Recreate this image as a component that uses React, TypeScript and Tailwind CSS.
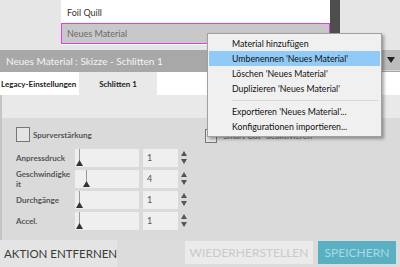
import React from "react";

const F = { fontFamily: 'Lato, "Noto Sans", sans-serif' };

function Tri() {
  return (
    <svg width="7" height="6" viewBox="0 0 7 6" className="block">
      <path d="M0 6 L3.5 0 L7 6 Z" fill="#333" />
    </svg>
  );
}

function Slider({ pos }: { pos: number }) {
  return (
    <div className="relative w-[64px] h-[18px] bg-[#efefef]">
      <div className="absolute top-0 w-px h-[12px] bg-[#9a9a9a]" style={{ left: pos + 3 }} />
      <div className="absolute top-[11px]" style={{ left: pos }}>
        <Tri />
      </div>
    </div>
  );
}

function Spinner() {
  return (
    <div className="flex flex-col items-center justify-center gap-[3px] w-[8px] h-[18px]">
      <svg width="6" height="5" viewBox="0 0 6 5"><path d="M0 5 L3 0 L6 5Z" fill="#555" /></svg>
      <svg width="6" height="5" viewBox="0 0 6 5"><path d="M0 0 L3 5 L6 0Z" fill="#555" /></svg>
    </div>
  );
}

function Row({ label, value, pos }: { label: React.ReactNode; value: string; pos: number }) {
  return (
    <div className="flex items-center h-[21px] pl-[14px]">
      <div className="w-[59px] text-[8px] leading-[10px] text-[#555] font-bold">{label}</div>
      <Slider pos={pos} />
      <div className="ml-[4px] w-[35px] h-[18px] bg-[#efefef] text-[9px] text-[#555] pl-[4px] leading-[18px]">{value}</div>
      <div className="ml-[2px]"><Spinner /></div>
    </div>
  );
}

export default function App() {
  const items = [
    "Material hinzufügen",
    "Umbenennen 'Neues Material'",
    "Löschen 'Neues Material'",
    "Duplizieren 'Neues Material'",
  ];
  return (
    <div className="relative w-[400px] h-[267px] overflow-hidden bg-[#dadada]" style={F}>
      {/* top list */}
      <div className="flex h-[50px] bg-[#e6e6e6]">
        <div className="w-[61px]" />
        <div className="w-[269px] h-[45px] bg-white pt-[3px]">
          <div className="h-[20px] pl-[6px] text-[9px] leading-[20px] text-[#333]">Foil Quill</div>
          <div className="h-[21px] border border-[#e040e0] bg-[#c8c8c8] pl-[5px] text-[9px] leading-[19px] text-[#6a6a6a]">Neues Material</div>
        </div>
        <div className="w-[10px] h-[45px] bg-[#4e4e4e]" />
      </div>
      {/* header */}
      <div className="flex h-[22px] bg-[#a8a8a8]">
        <div className="flex-1 pl-[6px] text-[10px] leading-[22px] text-[#f4f4f4]">Neues Material : Skizze - Schlitten 1</div>
        <div className="w-[19px] h-[21px] border-l border-b border-[#d6d6d6] bg-[#bcbcbc] flex items-center justify-center">
          <svg width="8" height="6" viewBox="0 0 8 6"><path d="M0 0 L8 0 L4 6Z" fill="#222" /></svg>
        </div>
      </div>
      {/* tabs */}
      <div className="flex h-[23px] bg-white">
        <div className="w-[79px] text-[8px] font-bold text-[#222] leading-[25px] pl-px whitespace-nowrap">Legacy-Einstellungen</div>
        <div className="w-[78px] bg-[#e9e9e9] text-[8px] font-bold text-[#222] leading-[25px] text-center">Schlitten 1</div>
      </div>
      {/* content */}
      <div className="h-[23px] bg-[#e9e9e9] border-l-2 border-[#c4c4c4]" />
      <div className="h-[122px] bg-[#dadada] border-l-2 border-[#c4c4c4] pt-[9px]">
        <div className="flex items-center h-[15px] pl-[14px]">
          <div className="flex items-center w-[189px]">
            <div className="w-[14px] h-[15px] border border-[#777] bg-[#e4e4e4]" />
            <div className="ml-[3px] text-[8px] text-[#555] font-bold">Spurverstärkung</div>
          </div>
          <div className="w-[12px] h-[14px] mt-[2px] border border-[#777] bg-[#e4e4e4]" />
          <div className="ml-[3px] mt-[3px] text-[8.5px] text-[#666]">"Smart Cut" deaktivieren</div>
        </div>
        <div className="mt-[5px]">
          <Row label="Anpressdruck" value="1" pos={1} />
          <Row label={<>Geschwindigke<br />it</>} value="4" pos={8} />
          <Row label="Durchgänge" value="1" pos={1} />
          <Row label="Accel." value="1" pos={1} />
        </div>
      </div>
      {/* bottom */}
      <div className="flex h-[27px] bg-[#dcdcdc]">
        <div className="w-[117px] bg-[#e4e4e4] text-[11.5px] text-[#3a3a3a] leading-[27px] pl-[4px] whitespace-nowrap">AKTION ENTFERNEN</div>
        <div className="ml-[68px] mt-[1px] w-[128px] h-[23px] bg-[#ebebeb] text-[12px] text-[#cacaca] leading-[23px] text-center">WIEDERHERSTELLEN</div>
        <div className="ml-[5px] mt-[1px] w-[78px] h-[23px] bg-[#5aafc2] text-[12px] text-[#a6dbe5] leading-[23px] text-center">SPEICHERN</div>
      </div>
      {/* context menu */}
      <div className="absolute left-[207px] top-[33px] w-[175px] bg-[#f0f0f0] border border-[#a0a0a0] py-[2px] shadow-[2px_2px_3px_rgba(0,0,0,0.35)]">
        {items.map((t, i) => (
          <div key={t} className={"mx-px h-[15px] pl-[23px] text-[8.75px] leading-[15px] text-[#111] whitespace-nowrap " + (i === 1 ? "bg-[#91c9f7]" : "")}>{t}</div>
        ))}
        <div className="h-[8px] flex items-center pl-[24px] pr-[3px]"><div className="h-px w-full bg-[#d7d7d7]" /></div>
        <div className="mx-px h-[15px] pl-[23px] text-[8.75px] leading-[15px] text-[#111] whitespace-nowrap">Exportieren 'Neues Material'...</div>
        <div className="mx-px h-[15px] pl-[23px] text-[8.75px] leading-[15px] text-[#111] whitespace-nowrap">Konfigurationen importieren...</div>
      </div>
    </div>
  );
}
